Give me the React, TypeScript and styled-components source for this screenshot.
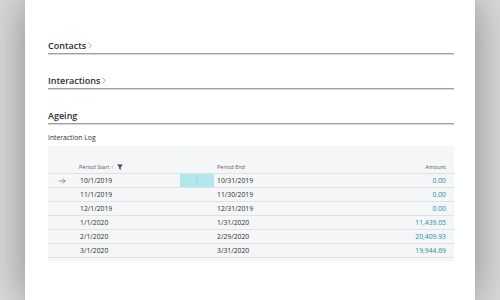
import React from 'react'
import styled, { createGlobalStyle } from 'styled-components'

const GlobalStyle = createGlobalStyle`
  html, body { margin: 0; padding: 0; }
  body {
    background: #dadada;
    font-family: "Open Sans", "Noto Sans", sans-serif;
    overflow: hidden;
  }
`

const Page = styled.div`
  width: 450px;
  height: 300px;
  margin: 0 auto;
  background: #fff;
  box-shadow: 0 0 40px rgba(0, 0, 0, 0.38);
  padding: 38px 21px 0 23px;
  box-sizing: border-box;
`

const Heading = styled.div<{ first?: boolean }>`
  display: flex;
  align-items: center;
  gap: 2px;
  height: 15px;
  line-height: 15px;
  margin-top: ${p => (p.first ? 0 : 19)}px;
  font-size: 9px;
  font-weight: 600;
  color: #2e2e2e;
  border-bottom: 1px solid #9ca1a9;
  box-shadow: 0 1px 0 #d4d7db;
  svg {
    width: 4px;
    height: 7px;
    display: block;
  }
`

const SubTitle = styled.div`
  margin-top: 9px;
  line-height: 10px;
  font-size: 6.8px;
  color: #2e2e2e;
`

const Table = styled.div`
  margin-top: 3px;
  background: #f5f6f7;
  padding-bottom: 3px;
`

const Row = styled.div<{ head?: boolean }>`
  display: grid;
  grid-template-columns: 30px 102px 34px 1fr 110px;
  height: ${p => (p.head ? 27 : 13)}px;
  border-bottom: 1px solid #e0e2e5;
  align-items: ${p => (p.head ? 'end' : 'stretch')};
  font-size: ${p => (p.head ? 5.5 : 6.8)}px;
  color: ${p => (p.head ? '#5c5c5c' : '#2e2e2e')};
  line-height: ${p => (p.head ? 12 : 13)}px;
`

const Cell = styled.div<{ right?: boolean; teal?: boolean; pad?: number }>`
  padding-left: ${p => p.pad ?? 2}px;
  padding-right: ${p => (p.right ? 8 : 0)}px;
  color: ${p => (p.teal ? '#20909a' : 'inherit')};
  white-space: nowrap;
  display: flex;
  align-items: center;
  justify-content: ${p => (p.right ? 'flex-end' : 'flex-start')};
  gap: 3px;
`

const ArrowCell = styled.div`
  display: flex;
  align-items: center;
  padding-left: 11px;
  svg { display: block; }
`

const Handle = styled.div<{ on?: boolean }>`
  background: ${p => (p.on ? '#b2e7eb' : 'transparent')};
  display: flex;
  align-items: center;
  justify-content: center;
  svg { display: block; }
`

const Chevron = () => (
  <svg viewBox="0 0 4 7">
    <path d="M0.6 0.6 L3.3 3.5 L0.6 6.4" fill="none" stroke="#777" strokeWidth="0.6" />
  </svg>
)

const rows = [
  ['10/1/2019', '10/31/2019', '0.00'],
  ['11/1/2019', '11/30/2019', '0.00'],
  ['12/1/2019', '12/31/2019', '0.00'],
  ['1/1/2020', '1/31/2020', '11,439.05'],
  ['2/1/2020', '2/29/2020', '20,409.93'],
  ['3/1/2020', '3/31/2020', '19,944.69'],
]

export default function App() {
  return (
    <>
      <GlobalStyle />
      <Page>
        <Heading first>Contacts<Chevron /></Heading>
        <Heading>Interactions<Chevron /></Heading>
        <Heading>Ageing</Heading>
        <SubTitle>Interaction Log</SubTitle>
        <Table>
          <Row head>
            <div />
            <Cell pad={1}>
              Period Start ↑
              <svg width="6" height="6" viewBox="0 0 6 6">
                <path d="M0 0.5 H6 L3.8 3 V5.8 L2.2 5 V3 Z" fill="#444" />
              </svg>
            </Cell>
            <div />
            <Cell pad={3}>Period End</Cell>
            <Cell right>Amount</Cell>
          </Row>
          {rows.map((r, i) => (
            <Row key={r[0]}>
              <ArrowCell>
                {i === 0 && (
                  <svg width="7" height="6" viewBox="0 0 7 6">
                    <path d="M0 3 H6.2 M3.8 0.6 L6.2 3 L3.8 5.4" fill="none" stroke="#666" strokeWidth="0.7" />
                  </svg>
                )}
              </ArrowCell>
              <Cell>{r[0]}</Cell>
              <Handle on={i === 0}>
                {i === 0 && (
                  <svg width="2" height="8" viewBox="0 0 2 8">
                    <circle cx="1" cy="1" r="0.5" fill="#6a9a9e" />
                    <circle cx="1" cy="4" r="0.5" fill="#6a9a9e" />
                    <circle cx="1" cy="7" r="0.5" fill="#6a9a9e" />
                  </svg>
                )}
              </Handle>
              <Cell pad={3}>{r[1]}</Cell>
              <Cell right teal>{r[2]}</Cell>
            </Row>
          ))}
        </Table>
      </Page>
    </>
  )
}
